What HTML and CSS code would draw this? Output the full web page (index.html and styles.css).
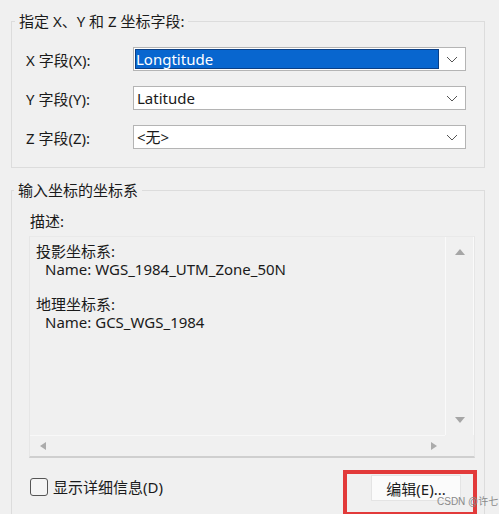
FILE: index.html
```html
<!DOCTYPE html>
<html lang="zh">
<head>
<meta charset="utf-8">
<link rel="stylesheet" href="styles.css">
</head>
<body>
<div class="dialog">
  <fieldset class="group group-fields">
    <legend class="legend legend-1">指定 X、Y 和 Z 坐标字段:</legend>
    <div class="row">
      <span class="label">X 字段(X):</span>
      <div class="combo"><span class="value selected">Longtitude</span><span class="chev"><svg width="12" height="7" viewBox="0 0 12 7"><path d="M1 1l5 5 5-5" fill="none" stroke="#555" stroke-width="1"/></svg></span></div>
    </div>
    <div class="row">
      <span class="label">Y 字段(Y):</span>
      <div class="combo"><span class="value">Latitude</span><span class="chev"><svg width="12" height="7" viewBox="0 0 12 7"><path d="M1 1l5 5 5-5" fill="none" stroke="#555" stroke-width="1"/></svg></span></div>
    </div>
    <div class="row">
      <span class="label">Z 字段(Z):</span>
      <div class="combo"><span class="value">&lt;无&gt;</span><span class="chev"><svg width="12" height="7" viewBox="0 0 12 7"><path d="M1 1l5 5 5-5" fill="none" stroke="#555" stroke-width="1"/></svg></span></div>
    </div>
  </fieldset>
  <fieldset class="group group-cs">
    <legend class="legend legend-2">输入坐标的坐标系</legend>
    <div class="desc-label">描述:</div>
    <div class="textbox">
      <div class="text-area">
        <div class="content">
          <div class="heading">投影坐标系:</div>
          <div class="name">Name: WGS_1984_UTM_Zone_50N</div>
          <div class="heading gap">地理坐标系:</div>
          <div class="name">Name: GCS_WGS_1984</div>
        </div>
        <div class="vscroll">
          <span class="tri tri-up"></span>
          <span class="tri tri-down"></span>
        </div>
      </div>
      <div class="hscroll">
        <span class="tri tri-left"></span>
        <span class="tri tri-right"></span>
      </div>
    </div>
    <div class="bottom">
      <label class="check"><span class="box"></span><span>显示详细信息(D)</span></label>
      <button class="btn">编辑(E)...</button>
    </div>
  </fieldset>
  <div class="highlight-box"></div>
  <div class="watermark">CSDN @许七</div>
</div>
</body>
</html>
```
FILE: styles.css
```css
* { box-sizing: border-box; }
html, body { margin: 0; padding: 0; }
body {
  background: #f0f0f0;
  font-family: "Noto Sans", "Noto Sans CJK SC", sans-serif;
  font-size: 15px;
  color: #1a1a1a;
  width: 499px;
  height: 514px;
  overflow: hidden;
}
.dialog {
  position: relative;
  width: 499px;
  height: 514px;
  padding: 12px 14px 0 11px;
  display: flex;
  flex-direction: column;
}
.group {
  margin: 0;
  border: 1px solid #dcdcdc;
  padding: 0;
  min-width: 0;
}
.legend {
  padding: 0 4px 0 4px;
  line-height: 18px;
  color: #1a1a1a;
}
.legend-1 { margin-left: -11px; }
.legend-2 { margin-left: -15px; }
.group-fields {
  height: 156px;
  padding: 17px 18px 0 14px;
  display: flex;
  flex-direction: column;
  gap: 15px;
}
.row {
  display: flex;
  align-items: center;
  height: 24px;
}
.label {
  width: 107px;
  flex: none;
}
.combo {
  flex: 1;
  height: 24px;
  background: #fff;
  border: 1px solid #b4b4b4;
  display: flex;
  align-items: stretch;
}
.value {
  flex: 1;
  padding: 0 2px;
  margin: 1px;
  line-height: 20px;
}
.value.selected {
  background: #0866cf;
  color: #fff;
  border: 1px solid #0a3f86;
  line-height: 18px;
  padding: 0;
  margin-right: 0;
}
.chev {
  width: 26px;
  flex: none;
  display: flex;
  align-items: center;
  justify-content: center;
}
.group-cs {
  margin-top: 13px;
  flex: 1;
  border-bottom: none;
  padding: 12px 9px 0 17px;
  display: flex;
  flex-direction: column;
}
.desc-label {
  line-height: 20px;
  margin-left: 1px;
}
.textbox {
  margin-top: 5px;
  height: 222px;
  border: 1px solid #e6e6e6;
  border-bottom: 2px solid #cfcfcf;
  border-top-color: #e9e9e9;
  display: flex;
  flex-direction: column;
}
.text-area {
  flex: 1;
  display: flex;
}
.content {
  flex: 1;
  padding: 5px 0 0 6px;
  line-height: 18px;
}
.heading.gap { margin-top: 17px; }
.name { padding-left: 9px; }
.vscroll {
  width: 29px;
  flex: none;
  border-left: 1px solid #fafafa;
  border-right: 1px solid #fafafa;
  display: flex;
  flex-direction: column;
  justify-content: space-between;
  align-items: center;
  padding: 12px 0 12px;
}
.hscroll {
  height: 21px;
  border-top: 1px solid #f8f8f8;
  margin-right: 29px;
  display: flex;
  align-items: center;
  justify-content: space-between;
  padding: 0 8px 0 10px;
}
.tri { width: 0; height: 0; display: block; }
.tri-up { border-left: 5px solid transparent; border-right: 5px solid transparent; border-bottom: 6px solid #a6a6a6; }
.tri-down { border-left: 5px solid transparent; border-right: 5px solid transparent; border-top: 6px solid #a6a6a6; }
.tri-left { border-top: 4px solid transparent; border-bottom: 4px solid transparent; border-right: 6px solid #ababab; }
.tri-right { border-top: 4px solid transparent; border-bottom: 4px solid transparent; border-left: 6px solid #ababab; }
.bottom {
  margin-top: 17px;
  display: flex;
  align-items: flex-start;
  justify-content: space-between;
  padding-right: 14px;
}
.check { display: flex; align-items: center; gap: 5px; margin-left: 1px; margin-top: 1px; }
.box {
  width: 18px;
  height: 18px;
  border: 1.5px solid #555;
  border-radius: 3px;
  background: #f4f4f4;
}
.btn {
  width: 90px;
  height: 26px;
  font: inherit;
  color: #1a1a1a;
  background: #fbfbfb;
  border: 1px solid #e4e4e4;
  padding: 0;
}
.highlight-box {
  position: absolute;
  left: 343px;
  top: 470px;
  width: 134px;
  height: 46px;
  border: 4px solid #e23a3a;
  pointer-events: none;
}
.watermark {
  position: absolute;
  left: 437px;
  top: 493px;
  font-size: 10px;
  color: #8a8a8a;
  font-family: "Liberation Sans", "Noto Sans CJK SC", sans-serif;
}
```
